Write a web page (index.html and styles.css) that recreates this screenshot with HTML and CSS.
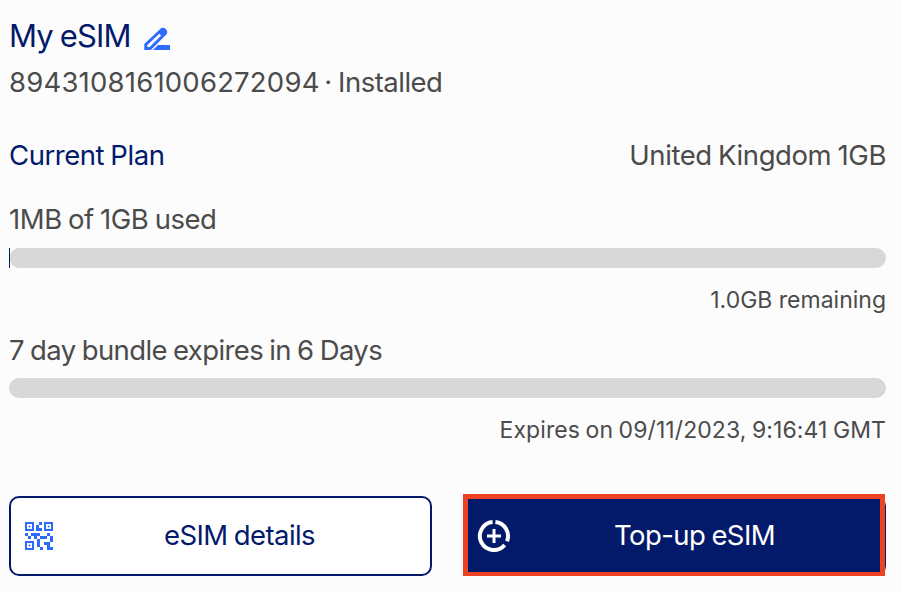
FILE: index.html
```html
<!DOCTYPE html>
<html lang="en">
  <head>
    <title>My eSIM</title>
    <meta charset="UTF-8">
    <link rel="stylesheet" href="styles.css">
  </head>
  <body>
    <div class="header">
      <h1 class="title">My eSIM</h1>
      <svg class="edit" width="28" height="26" viewBox="0 0 28 26">
        <path d="M2.8 17.5 L18.2 3 Q20 1.5 21.8 3.2 Q23.5 5 22 6.8 L7.2 21.5 H2.8 Z" fill="none" stroke="#2d6bff" stroke-width="3"/>
        <path d="M15.5 5.5 L18.3 2.7 Q20.2 1.5 21.8 3.2 Q23.2 5 22 6.8 L19 9.5 Z" fill="#2d6bff"/>
        <path d="M10 23 L15 18 H27 V23 Z" fill="#2d6bff"/>
      </svg>
    </div>
    <p class="iccid"><span class="number">8943108161006272094</span> <span class="status">· Installed</span></p>

    <div class="plan">
      <span class="plan-label">Current Plan</span>
      <span class="plan-name">United Kingdom 1GB</span>
    </div>

    <p class="usage">1MB of 1GB used</p>
    <div class="bar bar-data"></div>
    <p class="note remaining">1.0GB remaining</p>

    <p class="usage days">7 day bundle expires in 6 Days</p>
    <div class="bar"></div>
    <p class="note expires">Expires on 09/11/2023, 9:16:41 GMT</p>

    <div class="buttons">
      <a class="button details">
        <svg class="qr" width="28" height="28" viewBox="0 0 28 28" shape-rendering="crispEdges">
          <g fill="none" stroke="#2d6bff" stroke-width="2">
            <path d="M1 1h7v7h-7z M20 1h7v7h-7z M1 20h7v7h-7z"/>
          </g>
          <path fill="#2d6bff" d="M14 0h3v3h-3z M11 3h3v3h3v3h-6z M0 11h3v3h-3z M6 11h9v3h-9z M22 11h3v3h-3z M3 14h3v3h-3z M9 14h3v3h-3z M15 14h7v3h-7z M25 14h3v6h-3z M12 17h3v8h-3z M19 20h6v8h-3v-5h-3z M25 25h3v3h-3z M15 25h3v3h-3z"/>
          <path fill="#2d6bff" d="M4 4h1v1h-1z M23 4h1v1h-1z M4 23h1v1h-1z"/>
          <path fill="#a5c0ff" d="M3 4h1v1h-1z M5 4h1v1h-1z M4 3h1v1h-1z M4 5h1v1h-1z M22 4h1v1h-1z M24 4h1v1h-1z M23 3h1v1h-1z M23 5h1v1h-1z M3 23h1v1h-1z M5 23h1v1h-1z M4 22h1v1h-1z M4 24h1v1h-1z"/>
        </svg>
        <span class="text">eSIM details</span>
      </a>
      <a class="button topup">
        <svg class="plus" width="34" height="34" viewBox="0 0 34 34">
          <path d="M18.4 3.1 A14 14 0 0 1 30 22.2 M27.6 26 A14 14 0 1 1 15.6 3.1" fill="none" stroke="#fff" stroke-width="4"/>
          <path d="M17 10 V24 M10 17 H24" stroke="#fff" stroke-width="3"/>
        </svg>
        <span class="text">Top-up eSIM</span>
      </a>
    </div>
  </body>
</html>
```
FILE: styles.css
```css
body {
  margin: 0;
  padding: 16px 16px 0 9px;
  background: #fcfcfc;
  font-family: Inter, 'Liberation Sans', sans-serif;
  font-size: 27.5px;
  line-height: 40px;
  word-spacing: -1px;
  color: #4b4b4b;
}
h1, p {
  margin: 0;
}
p, span {
  white-space: nowrap;
}
.header {
  display: flex;
  height: 40px;
}
.title {
  width: 134px;
  font-size: 31px;
  font-weight: 400;
  letter-spacing: -0.85px;
  color: #031a6b;
  white-space: nowrap;
}
.edit {
  margin-top: 11px;
}
.iccid {
  margin-top: 6px;
}
.number {
  letter-spacing: 0.2px;
}
.status {
  margin-left: -2px;
  letter-spacing: -0.5px;
}
.plan {
  display: flex;
  justify-content: space-between;
  margin-top: 33px;
  letter-spacing: -0.46px;
}
.plan-label {
  color: #031a6b;
}
.plan-name {
  letter-spacing: -0.42px;
}
.usage {
  margin-top: 24px;
  letter-spacing: -0.45px;
}
.bar {
  height: 20px;
  margin-top: 9px;
  border-radius: 10px;
  background: #d8d8d8;
}
.bar-data {
  border-left: 1px solid #031a6b;
  border-radius: 0 10px 10px 0;
  background: radial-gradient(circle at 10px 10px, #d8d8d8 10px, #fcfcfc 10.5px) 0 0 / 10px 20px no-repeat,
    linear-gradient(#d8d8d8, #d8d8d8) 10px 0 no-repeat;
}
.note {
  margin-top: 12px;
  font-size: 23px;
  word-spacing: 0;
  text-align: right;
}
.days {
  margin-top: 10px;
  letter-spacing: -0.61px;
}
.days + .bar {
  margin-top: 8px;
}
.expires {
  letter-spacing: 0.08px;
  word-spacing: -1px;
}
.buttons {
  display: flex;
  gap: 31px;
  margin-top: 46px;
}
.button {
  display: flex;
  align-items: center;
  box-sizing: border-box;
  width: 423px;
  height: 80px;
  border: 2px solid #031a6b;
  border-radius: 10px;
  letter-spacing: -0.57px;
  color: #031a6b;
  background: #fff;
}
.button .text {
  flex: 1;
  padding: 0 4px 2px 0;
  text-align: center;
}
.qr {
  margin-left: 14px;
}
.topup {
  position: relative;
  color: #fff;
  background: #031a6b;
}
.topup .text {
  padding-right: 6px;
}
/* red frame around the top-up button */
.topup:after {
  content: "";
  position: absolute;
  box-sizing: border-box;
  top: -4px;
  left: -2px;
  width: 422px;
  height: 83px;
  border: 5px solid #ee4023;
}
.plus {
  margin-left: 12px;
}
```
